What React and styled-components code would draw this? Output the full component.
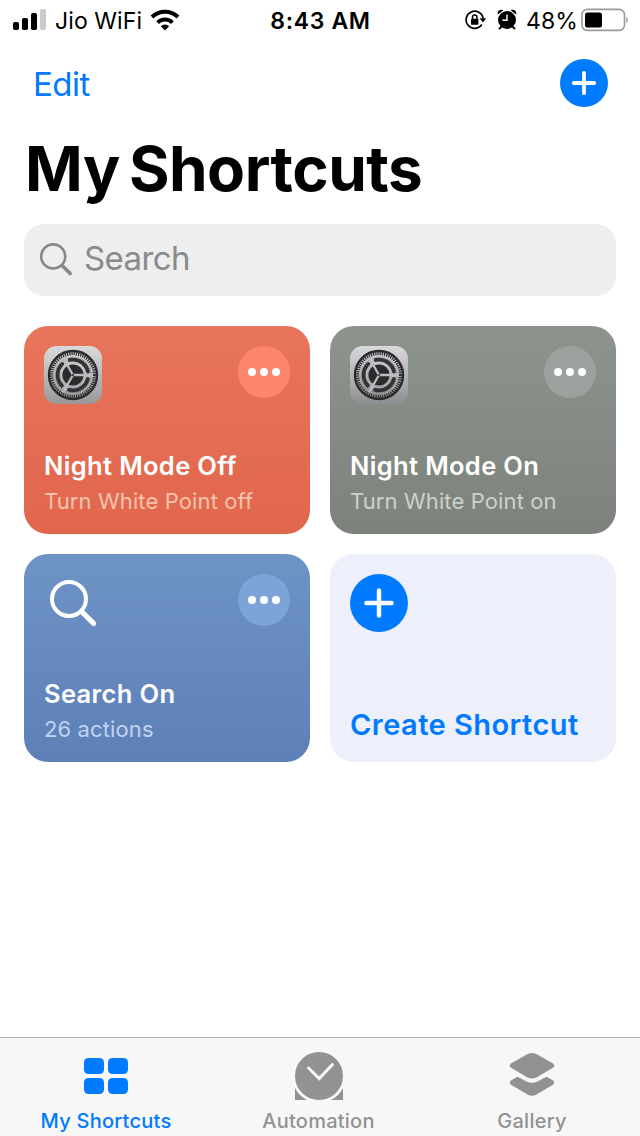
import React from 'react';
import styled, { createGlobalStyle } from 'styled-components';

const GlobalStyle = createGlobalStyle`
* {
    box-sizing: border-box;
}
body {
    margin: 0;
    background-color: #fff;
    font-family: Inter, "Liberation Sans", sans-serif;
    -webkit-font-smoothing: antialiased;
}
h1, h2, p {
    margin: 0;
}
button {
    border: none;
    padding: 0;
    background: none;
    font-family: inherit;
    cursor: pointer;
}
svg {
    display: block;
    flex-shrink: 0;
}
`;

const Screen = styled.div`
width: 640px;
height: 1136px;
display: flex;
flex-direction: column;
overflow: hidden;
background-color: #fff;
`;

const StatusBar = styled.div`
height: 40px;
display: grid;
grid-template-columns: 1fr auto 1fr;
align-items: center;
padding: 0 12px 0 13px;
color: #000;
`;

const StatusGroup = styled.div`
display: flex;
align-items: center;
justify-content: ${props => props.$end ? 'flex-end' : 'flex-start'};
`;

const StatusText = styled.span`
padding-top: 2px;
font-size: 23px;
line-height: 38px;
font-weight: 400;
letter-spacing: 0.1px;
white-space: nowrap;
`;

const Clock = styled(StatusText)`
font-weight: 600;
letter-spacing: 0.65px;
`;

const Carrier = styled(StatusText)`
margin: 0 8px 0 9px;
`;

const Percent = styled(StatusText)`
margin: 0 3px 0 9px;
`;

const StatusIcons = styled.div`
display: flex;
align-items: center;
gap: 10px;
`;

const NavBar = styled.div`
height: 86px;
display: flex;
justify-content: space-between;
align-items: center;
padding: 0 32px 0 33px;
`;

const EditButton = styled.button`
padding-top: 2px;
font-size: 33px;
line-height: 40px;
letter-spacing: -0.5px;
color: #007aff;
`;

const Title = styled.h1`
height: 98px;
padding: 0 25px;
font-size: 62px;
line-height: 85px;
font-weight: 700;
letter-spacing: -0.5px;
word-spacing: -5px;
color: #000;
white-space: nowrap;
`;

const SearchBar = styled.div`
height: 72px;
margin: 0 24px 30px;
padding: 0 14px 3px;
display: flex;
align-items: center;
border-radius: 20px;
background-color: #eee;
`;

const SearchText = styled.span`
margin-left: 10px;
padding-bottom: 2px;
font-size: 33px;
line-height: 40px;
letter-spacing: -0.6px;
color: #8a8a8d;
`;

const CardGrid = styled.div`
display: grid;
grid-template-columns: 286px 286px;
grid-auto-rows: 208px;
gap: 20px;
padding: 0 24px;
`;

const Card = styled.div`
display: flex;
flex-direction: column;
justify-content: space-between;
padding: 20px;
border-radius: 24px;
background: ${props => props.$fill};
`;

const CardTop = styled.div`
display: flex;
justify-content: space-between;
align-items: flex-start;
`;

const MoreButton = styled.button`
width: 52px;
height: 52px;
display: flex;
justify-content: center;
align-items: center;
gap: 4px;
border-radius: 50%;
background-color: ${props => props.$color};
`;

const Dot = styled.span`
width: 8px;
height: 8px;
border-radius: 50%;
background-color: #fff;
`;

const CardTitle = styled.h2`
font-size: 25.5px;
line-height: 36px;
font-weight: 600;
letter-spacing: 0.35px;
color: #fff;
white-space: nowrap;
`;

const CardText = styled.p`
font-size: 22px;
line-height: 34px;
letter-spacing: 0.12px;
margin-bottom: -4px;
color: ${props => props.$color};
white-space: nowrap;
`;

const CreateText = styled.h2`
font-size: 29px;
line-height: 34px;
font-weight: 600;
letter-spacing: 0.45px;
color: #007aff;
white-space: nowrap;
`;

const TabBar = styled.div`
height: 99px;
margin-top: auto;
display: grid;
grid-template-columns: 212px 213px 214px;
border-top: 1px solid #b2b2b2;
background-color: #f7f7f7;
`;

const Tab = styled.div`
display: flex;
flex-direction: column;
align-items: center;
color: ${props => props.$active ? '#007aff' : '#929292'};
`;

const TabIcon = styled.div`
height: 69px;
padding-top: 13px;
`;

const TabLabel = styled.span`
font-size: 20px;
line-height: 28px;
font-weight: 500;
letter-spacing: 0.25px;
white-space: nowrap;
`;

const SignalIcon = () => (
    <svg width="33" height="22" viewBox="0 0 33 22">
        <rect x="0" y="13" width="6" height="8" rx="1.8" />
        <rect x="9" y="9" width="6" height="12" rx="1.8" />
        <rect x="18" y="4" width="6" height="17" rx="1.8" />
        <rect x="27" y="0" width="6" height="21" rx="1.8" fill="#cbcbcb" />
    </svg>
);

const WifiIcon = () => (
    <svg width="30" height="22" viewBox="0 0 30 22">
        <path d="M15 21.5L10.9 17.2A6 6 0 0 1 19.1 17.2Z" />
        <path d="M7.6 13.6A10.6 10.6 0 0 1 22.4 13.6" fill="none" stroke="#000" strokeWidth="4" />
        <path d="M2 8A18.6 18.6 0 0 1 28 8" fill="none" stroke="#000" strokeWidth="4" />
    </svg>
);

const RotationLockIcon = () => (
    <svg width="22" height="20" viewBox="0 0 22 20">
        <path d="M16.8 14.6A8.6 8.6 0 1 1 18.2 8.4" fill="none" stroke="#000" strokeWidth="1.7" />
        <path d="M14.6 8.2H21.2L18 12.6Z" />
        <rect x="6" y="8.7" width="7.4" height="6" rx="0.8" />
        <path d="M7.5 9V7.1A2.2 2.2 0 0 1 11.9 7.1V9" fill="none" stroke="#000" strokeWidth="1.5" />
    </svg>
);

const AlarmIcon = () => (
    <svg width="20" height="22" viewBox="0 0 20 22">
        <circle cx="10" cy="11" r="9" />
        <path d="M0.9 5.4C-0.2 2.4 2.8 -0.2 6.3 1.2ZM19.1 5.4C20.2 2.4 17.2 -0.2 13.7 1.2Z" />
        <path d="M4.6 17.6L2.6 19.4M15.4 17.6L17.4 19.4" stroke="#000" strokeWidth="2" strokeLinecap="round" />
        <path d="M10 5.4V11.2H5.4" fill="none" stroke="#fff" strokeWidth="1.4" />
    </svg>
);

const BatteryIcon = () => (
    <svg width="47" height="24" viewBox="0 0 47 24">
        <rect x="0.9" y="1.4" width="42.6" height="21" rx="5.4" fill="none" stroke="#999" strokeWidth="1.6" />
        <rect x="4" y="4.5" width="17" height="15" rx="2.6" />
        <path d="M45.4 8.6C47.3 9.6 47.3 14.2 45.4 15.2Z" fill="#999" />
    </svg>
);

const PlusIcon = ({size, arm, stroke}) => (
    <svg width={size} height={size} viewBox={`${-size / 2} ${-size / 2} ${size} ${size}`}>
        <circle r={size / 2} fill="#007aff" />
        <path d={`M0 ${-arm}V${arm}M${-arm} 0H${arm}`} stroke="#fff" strokeWidth={stroke} strokeLinecap="round" />
    </svg>
);

const SearchIcon = () => (
    <svg width="36" height="36" viewBox="0 0 36 36" fill="none" stroke="#88888b">
        <circle cx="15.2" cy="15.4" r="12" strokeWidth="2.6" />
        <path d="M24 24.4L32.2 32.6" strokeWidth="3.6" strokeLinecap="round" />
    </svg>
);

const MagnifierIcon = () => (
    <svg width="58" height="58" viewBox="0 0 58 58" fill="none" stroke="#fff">
        <circle cx="25" cy="25" r="17" strokeWidth="4" />
        <path d="M37.5 37.5L49.6 49.4" strokeWidth="5.2" strokeLinecap="round" />
    </svg>
);

const SettingsIcon = ({id, from, to}) => (
    <svg width="58" height="58" viewBox="0 0 58 58" fill="none">
        <defs>
            <linearGradient id={id} x1="0" y1="0" x2="0" y2="1">
                <stop offset="0" stopColor={from} />
                <stop offset="1" stopColor={to} />
            </linearGradient>
        </defs>
        <rect width="58" height="58" rx="12.5" fill={`url(#${id})`} />
        <g transform="translate(29 29)">
            <circle r="24" stroke="#2b2b2e" strokeWidth="2.4" />
            <circle r="21.4" stroke="#2b2b2e" strokeWidth="3" strokeDasharray="1.25 0.991" />
            <circle r="15.4" stroke="#333336" strokeWidth="3.8" strokeLinecap="round" strokeDasharray="24 8.254" strokeDashoffset="-4.13" />
            <circle r="17.8" stroke="#333336" strokeWidth="1.2" strokeDasharray="1 1" opacity="0.4" />
            <circle r="10.6" fill="#2b2b2e" />
            <path d="M0 0H20M0 0L-10 -17.32M0 0L-10 17.32" stroke="#bbbbbf" strokeWidth="2.3" />
            <circle r="1.2" fill="#4a4a4d" />
        </g>
    </svg>
);

const ShortcutsTabIcon = () => (
    <svg width="44" height="50" viewBox="0 0 44 50" fill="currentColor">
        <rect x="0" y="7" width="20" height="16" rx="4.5" />
        <rect x="24" y="7" width="20" height="16" rx="4.5" />
        <rect x="0" y="27" width="20" height="16" rx="4.5" />
        <rect x="24" y="27" width="20" height="16" rx="4.5" />
    </svg>
);

const AutomationTabIcon = () => (
    <svg width="48" height="50" viewBox="0 0 48 50" fill="currentColor">
        <path d="M0 37V49H48V37Z" />
        <circle cx="24" cy="25" r="26.8" fill="#f7f7f7" />
        <circle cx="24" cy="25" r="24" />
        <path d="M13.6 17L24.2 27.6L37.4 13.6" fill="none" stroke="#f7f7f7" strokeWidth="3" strokeLinecap="round" />
    </svg>
);

const GalleryTabIcon = () => (
    <svg width="46" height="50" viewBox="0 0 46 50" fill="currentColor">
        <path d="M18.6 3Q23 0.8 27.4 3L43.6 12.2Q47 14.6 43.6 17L27.4 26.4Q23 28.6 18.6 26.4L2.4 17Q-1 14.6 2.4 12.2Z" />
        <path d="M8.4 25.8L17.6 30.4Q23 33 28.4 30.4L37.6 25.8L43.6 29.2Q47 31.6 43.6 34L27.4 43.4Q23 46 18.6 43.4L2.4 34Q-1 31.6 2.4 29.2Z" />
    </svg>
);

const shortcuts = [
    {
        title: 'Night Mode Off',
        text: 'Turn White Point off',
        fill: 'linear-gradient(#e8755c, #e1664c)',
        more: '#fc866c',
        textColor: '#f7c3ad',
        icon: <SettingsIcon id="gearOff" from="#dadadc" to="#98989b" />,
    },
    {
        title: 'Night Mode On',
        text: 'Turn White Point on',
        fill: 'linear-gradient(#8d948d, #7d837c)',
        more: '#9ba29d',
        textColor: '#cdd1cd',
        icon: <SettingsIcon id="gearOn" from="#dadade" to="#8e8e90" />,
    },
    {
        title: 'Search On',
        text: '26 actions',
        fill: 'linear-gradient(#6e93c5, #5d80b7)',
        more: '#7ea3d8',
        textColor: '#bfd2f0',
        icon: <MagnifierIcon />,
    },
];

const tabs = [
    { label: 'My Shortcuts', icon: <ShortcutsTabIcon />, active: true },
    { label: 'Automation', icon: <AutomationTabIcon /> },
    { label: 'Gallery', icon: <GalleryTabIcon /> },
];

const ShortcutCard = ({shortcut}) => {
    return (
        <Card $fill={shortcut.fill}>
            <CardTop>
                {shortcut.icon}
                <MoreButton $color={shortcut.more}>
                    <Dot />
                    <Dot />
                    <Dot />
                </MoreButton>
            </CardTop>
            <div>
                <CardTitle>{shortcut.title}</CardTitle>
                <CardText $color={shortcut.textColor}>{shortcut.text}</CardText>
            </div>
        </Card>
    )
}

const App = () => {
    return (
        <Screen>
            <GlobalStyle />
            <StatusBar>
                <StatusGroup>
                    <SignalIcon />
                    <Carrier>Jio WiFi</Carrier>
                    <WifiIcon />
                </StatusGroup>
                <Clock>8:43 AM</Clock>
                <StatusGroup $end>
                    <StatusIcons>
                        <RotationLockIcon />
                        <AlarmIcon />
                    </StatusIcons>
                    <Percent>48%</Percent>
                    <BatteryIcon />
                </StatusGroup>
            </StatusBar>
            <NavBar>
                <EditButton>Edit</EditButton>
                <PlusIcon size={48} arm={10.2} stroke={3.8} />
            </NavBar>
            <Title>My Shortcuts</Title>
            <SearchBar>
                <SearchIcon />
                <SearchText>Search</SearchText>
            </SearchBar>
            <CardGrid>
                {shortcuts.map(shortcut => (
                    <ShortcutCard key={shortcut.title} shortcut={shortcut} />
                ))}
                <Card $fill="#edf0fb">
                    <PlusIcon size={58} arm={12.6} stroke={4.4} />
                    <CreateText>Create Shortcut</CreateText>
                </Card>
            </CardGrid>
            <TabBar>
                {tabs.map(tab => (
                    <Tab key={tab.label} $active={tab.active}>
                        <TabIcon>{tab.icon}</TabIcon>
                        <TabLabel>{tab.label}</TabLabel>
                    </Tab>
                ))}
            </TabBar>
        </Screen>
    )
}

export default App
